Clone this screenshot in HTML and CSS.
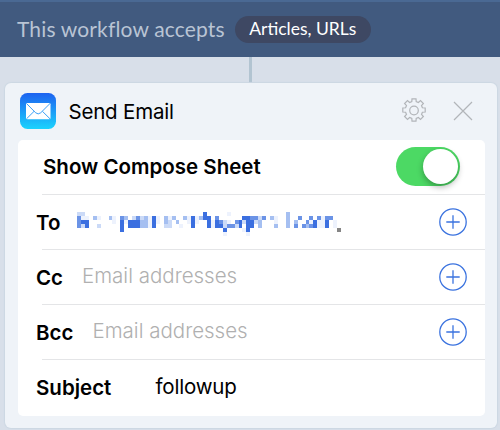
FILE: index.html
```html
<!DOCTYPE html>
<html lang="en">
<head>
<meta charset="utf-8">
<title>Send Email</title>
<link rel="stylesheet" href="styles.css">
</head>
<body>
<header class="topbar">
  <span class="accepts">This workflow accepts</span>
  <span class="pill">Articles, URLs</span>
</header>
<div class="connector"></div>
<main class="card">
  <div class="card-head">
    <svg class="mail" viewBox="0 0 36 36">
      <defs><linearGradient id="sky" x1="0" y1="0" x2="0" y2="1"><stop offset="0" stop-color="#1d62f0"/><stop offset="1" stop-color="#1bd3fd"/></linearGradient></defs>
      <rect width="36" height="36" rx="7.5" fill="url(#sky)"/>
      <rect x="6" y="10" width="24.5" height="16.2" rx="1.3" fill="#fff"/>
      <path d="M6.5 10.5l9.2 9.3q2.5 2.2 5 0l9.3-9.3M6.5 25.8l7.6-7.5M30 25.8l-7.6-7.5" fill="none" stroke="#3ba0f6" stroke-width="1"/>
    </svg>
    <h1 class="title">Send Email</h1>
    <svg class="gear" viewBox="0 0 26 26">
      <path d="M10.8 3.6L11 .8h4l.2 2.8 2.2.9 2.1-1.9 2.9 2.9-1.9 2.1.9 2.2 2.8.2v4l-2.8.2-.9 2.2 1.9 2.1-2.9 2.9-2.1-1.9-2.2.9-.2 2.8h-4l-.2-2.8-2.2-.9-2.1 1.9-2.9-2.9 1.9-2.1-.9-2.2-2.8-.2v-4l2.8-.2.9-2.2-1.9-2.1 2.9-2.9 2.1 1.9z"/>
      <circle cx="13" cy="12.5" r="4.3"/>
    </svg>
    <svg class="close" viewBox="0 0 20 20"><path d="M1 1l18 18M19 1L1 19"/></svg>
  </div>
  <section class="panel">
    <div class="row row-toggle">
      <span class="label label-show">Show Compose Sheet</span>
      <span class="toggle"><span class="knob"></span></span>
    </div>
    <div class="row">
      <span class="label label-to">To</span>
      <svg class="mosaic" viewBox="0 0 67 6" preserveAspectRatio="none" shape-rendering="crispEdges">
        <path class="s1" d="M1 1h2v1h-2zM5 1h1v1h-1zM9 1h1v2h-1zM12 2h1v1h-1zM18 1h1v3h-1zM20 1h1v2h-1zM23 1h1v1h-1zM26 3h1v1h-1zM28 1h1v2h-1zM30 1h1v2h-1zM34 2h1v2h-1zM38 0h1v1h-1zM38 2h1v1h-1zM37 5h1v1h-1zM43 5h1v1h-1zM42 4h1v1h-1zM50 1h1v2h-1zM59 2h1v1h-1zM61 2h1v2h-1zM62 1h1v3h-1zM65 2h1v2h-1z"/>
        <path class="s2" d="M0 0h2v1h-2zM1 3h1v1h-1zM5 3h1v1h-1zM14 1h1v1h-1zM16 1h1v1h-1zM22 3h1v1h-1zM23 2h1v2h-1zM37 2h1v2h-1zM40 3h1v1h-1zM42 2h1v1h-1zM45 2h1v1h-1zM46 1h1v1h-1z"/>
        <path class="s3" d="M4 1h1v1h-1zM8 1h1v1h-1zM12 1h1v1h-1zM16 2h1v2h-1zM17 1h1v3h-1zM22 1h1v2h-1zM24 1h1v1h-1zM25 2h1v1h-1zM27 1h1v1h-1zM31 1h1v1h-1zM46 2h1v2h-1zM49 1h1v1h-1zM50 3h1v1h-1zM53 0h1v4h-1zM55 2h1v1h-1zM58 3h1v1h-1z"/>
        <path class="s4" d="M0 1h1v3h-1zM11 1h1v1h-1zM15 1h1v1h-1zM35 1h1v1h-1zM36 2h1v1h-1zM38 3h2v1h-2zM40 2h1v1h-1zM44 1h2v1h-2zM47 1h1v1h-1zM55 3h1v1h-1zM56 1h1v1h-1zM57 3h1v1h-1zM58 2h1v1h-1zM59 1h1v1h-1zM59 3h1v1h-1zM61 1h1v1h-1zM63 1h2v1h-2z"/>
        <path class="s5" d="M1 2h2v1h-2zM2 3h1v1h-1zM11 2h1v3h-1zM13 2h3v2h-3zM19 1h1v3h-1zM29 1h1v3h-1zM32 0h1v2h-1zM33 1h1v3h-1zM35 2h1v2h-1zM36 3h1v1h-1zM37 4h1v1h-1zM41 2h1v2h-1zM42 1h2v1h-2zM43 2h1v3h-1zM44 2h1v2h-1zM60 2h1v2h-1zM63 2h1v2h-1z"/>
        <path class="dot" d="M66 4h1v1h-1z"/>
      </svg>
      <svg class="add" viewBox="0 0 28 28"><circle cx="14" cy="14" r="13.2"/><path d="M14 7.3v13.4M7.3 14h13.4"/></svg>
    </div>
    <div class="row">
      <span class="label label-cc">Cc</span>
      <span class="hint">Email addresses</span>
      <svg class="add" viewBox="0 0 28 28"><circle cx="14" cy="14" r="13.2"/><path d="M14 7.3v13.4M7.3 14h13.4"/></svg>
    </div>
    <div class="row">
      <span class="label label-bcc">Bcc</span>
      <span class="hint">Email addresses</span>
      <svg class="add" viewBox="0 0 28 28"><circle cx="14" cy="14" r="13.2"/><path d="M14 7.3v13.4M7.3 14h13.4"/></svg>
    </div>
    <div class="row row-subject">
      <span class="label label-subject">Subject</span>
      <span class="value">followup</span>
    </div>
  </section>
</main>
</body>
</html>
```

FILE: styles.css
```css
* { box-sizing: border-box; }
body {
  margin: 0;
  width: 500px;
  height: 430px;
  overflow: hidden;
  background: #d8dfe9;
  font-family: Inter, "Liberation Sans", sans-serif;
  color: #000;
}
svg { display: block; flex: none; }
.topbar {
  height: 57px;
  border-top: 2px solid #4a6993;
  background: #415a7f;
  display: flex;
  align-items: center;
  padding: 0 0 2px 17px;
  font-family: Lato, "Open Sans", sans-serif;
  white-space: nowrap;
}
.accepts { width: 217.5px; font-size: 21px; letter-spacing: 0.15px; color: #b9c4d4; }
.pill {
  width: 136.5px;
  height: 27px;
  margin-top: 2px;
  border-radius: 14px;
  background: #3e4863;
  color: #fff;
  font-size: 17.5px;
  line-height: 26px;
  text-align: center;
}
.connector { width: 3px; height: 26px; margin-left: 249px; background: #b2c4d1; }
.card {
  width: 492px;
  height: 345px;
  margin-left: 5px;
  padding: 0 12px 0 13px;
  border-radius: 6px;
  background: #eff3f8;
  box-shadow: 0 0 1px 1px #cdd8e3;
}
.card-head { height: 57px; display: flex; align-items: center; padding: 0 0 1px 1.5px; }
.mail { width: 36px; height: 36px; }
.title { margin: 0 0 0 13px; font-size: 20.5px; letter-spacing: -0.2px; font-weight: 400; white-space: nowrap; width: 332.5px; }
.gear, .close { fill: none; stroke: #b2b5b9; stroke-width: 1.2; }
.gear { width: 26px; height: 26px; }
.close { width: 20px; height: 20px; margin-left: 26px; }
.panel { width: 466.5px; height: 276px; background: #fff; border-radius: 5px; }
.row {
  height: 55px;
  display: flex;
  align-items: center;
  padding: 0 18px 1px 18px;
  white-space: nowrap;
  background: linear-gradient(#e4e5e7, #e4e5e7) 24px 100% / 100% 1px no-repeat;
}
.row-toggle { padding: 0 24.5px 2px 25px; }
.row-subject { height: 56px; background: none; padding-bottom: 2px; }
.label { font-size: 20.5px; font-weight: 600; }
.label-to { width: 41px; }
.label-cc { width: 46px; }
.label-bcc { width: 56.5px; }
.label-subject { width: 119.5px; }
.hint { font-size: 20.5px; font-weight: 300; color: #b0b0b0; padding-bottom: 4px; }
.value { font-size: 20.5px; letter-spacing: -0.2px; padding-bottom: 2px; }
.add { width: 28px; height: 28px; margin-left: auto; fill: none; stroke: #3b73df; stroke-width: 1.3; }
.toggle {
  width: 64px;
  height: 39px;
  margin-left: auto;
  padding: 2px;
  border-radius: 20px;
  background: #4cd964;
  display: flex;
  justify-content: flex-end;
}
.knob { width: 35px; height: 35px; border-radius: 50%; background: #fff; box-shadow: 0 3px 6px rgba(0,0,0,.3); }
.mosaic { width: 264px; height: 23.6px; margin-top: 4px; }
.s1 { fill: #edf2fd; }
.s2 { fill: #cbdaf7; }
.s3 { fill: #a5bff1; }
.s4 { fill: #6b93e6; }
.s5 { fill: #3b6fe0; }
.dot { fill: #858585; }
```
